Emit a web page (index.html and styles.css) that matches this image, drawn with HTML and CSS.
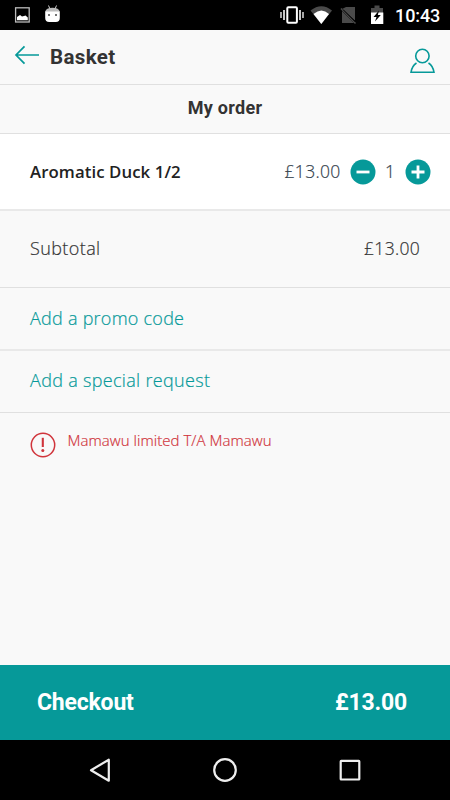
FILE: index.html
```html
<!DOCTYPE html>
<html lang="en">
<head>
<meta charset="utf-8">
<title>Basket</title>
<link rel="stylesheet" href="styles.css">
</head>
<body>
<div class="screen">
  <div class="status">
    <svg class="status-left" width="80" height="30" viewBox="0 0 80 30">
      <rect x="15.600" y="7.800" width="13.600" height="14.200" fill="none" stroke="#bbb" stroke-width="1.300"/>
      <path d="M17 20.300V17l3-2 2 1.500 2-.5 1.500-.5 2.300 2v2.800z" fill="#fff"/>
      <path d="M48.500 5.500l1.500 3.500M56.500 5.500L55 9" stroke="#ccc" stroke-width="1"/>
      <path d="M45.200 12Q46 7.800 52.500 7.800T59.800 12z" fill="#bbb"/>
      <path d="M45.200 11.500h14.600V18q0 4-4 4h-6.600q-4 0-4-4z" fill="#fff"/>
      <circle cx="49" cy="15" r="1" fill="#444"/><circle cx="56" cy="15" r="1" fill="#444"/>
    </svg>
    <svg class="status-right" width="114" height="30" viewBox="276 0 114 30">
      <rect x="287.300" y="7.300" width="9.600" height="15.400" rx="1" fill="none" stroke="#fff" stroke-width="2"/>
      <path d="M284 10v10M300 10v10" stroke="#ddd" stroke-width="1.800"/>
      <path d="M281 12v6M303 12v6" stroke="#ddd" stroke-width="1.500"/>
      <path d="M310.500 10.500Q321.500 2 332 10.500L321.300 24z" fill="#4a4a4a"/>
      <path d="M313.500 14Q321.500 7 329 14L321.300 24z" fill="#fff"/>
      <path d="M346 7h9v13.500L342 9zM342 11l12 12h-12z" fill="#4a4a4a"/>
      <path d="M341 8.500l14.500 15" stroke="#4a4a4a" stroke-width="1.500"/>
      <path d="M343 9.500l12.500 12.500" stroke="#000" stroke-width="1"/>
      <path d="M371 13V8h3.500V5.500h5V8h3.500v5z" fill="#4a4a4a"/>
      <path d="M371 12.500h12.300V24H371z" fill="#fff"/>
      <path d="M379 10.500l-5.500 6.500h3l-1.500 4.500 5.800-6.500h-3z" fill="#000"/>
    </svg>
    <span class="clock">10:43</span>
  </div>
  <header class="header">
    <svg class="back" width="26" height="20" viewBox="0 0 26 20" fill="none" stroke="#069999" stroke-width="1.700"><path d="M25 10H2M10.500 1.400L2 10l8.500 8.600"/></svg>
    <h1 class="title">Basket</h1>
    <svg class="user" width="28" height="28" viewBox="0 0 28 28" fill="none" stroke="#069999" stroke-width="1.600"><circle cx="13.400" cy="9" r="6.700"/><path d="M7.500 16Q3 19 2 25.300h23Q24 19 19.500 16"/></svg>
  </header>
  <h2 class="subhead">My order</h2>
  <div class="row item">
    <span class="name">Aromatic Duck 1/2</span>
    <span class="price item-price">£13.00</span>
    <svg class="btn" width="26" height="26" viewBox="0 0 26 26"><circle cx="13" cy="13" r="12.500" fill="#069999"/><path d="M6.500 13h13" stroke="#fff" stroke-width="2.800"/></svg>
    <span class="qty">1</span>
    <svg class="btn" width="26" height="26" viewBox="0 0 26 26"><circle cx="13" cy="13" r="12.500" fill="#069999"/><path d="M6.500 13h13M13 6.500v13" stroke="#fff" stroke-width="2.800"/></svg>
  </div>
  <div class="row subtotal"><span class="label">Subtotal</span><span class="price">£13.00</span></div>
  <div class="row promo"><span class="link link-promo">Add a promo code</span></div>
  <div class="row request"><span class="link link-request">Add a special request</span></div>
  <div class="notice">
    <svg width="26" height="26" viewBox="0 0 26 26" fill="none" stroke="#d0343b"><circle cx="13" cy="13" r="11.700" stroke-width="1.500"/><path d="M12.800 5.800v9.200" stroke-width="2.100"/><circle cx="12.800" cy="18.600" r="1.500" fill="#d0343b" stroke="none"/></svg>
    <span class="notice-text">Mamawu limited T/A Mamawu</span>
  </div>
  <div class="checkout"><span class="checkout-label">Checkout</span><span class="checkout-price">£13.00</span></div>
  <nav class="nav">
    <svg width="26" height="26" viewBox="0 0 26 26"><path d="M21.800 2.700v21L4 13.200z"/></svg>
    <svg width="26" height="26" viewBox="0 0 26 26"><circle cx="13" cy="13" r="10.800"/></svg>
    <svg width="26" height="26" viewBox="0 0 26 26"><rect x="3.700" y="3.900" width="18.600" height="18.600" rx=".5"/></svg>
  </nav>
</div>
</body>
</html>
```
FILE: styles.css
```css
* { box-sizing: border-box; }
body { margin: 0; }
.screen {
  width: 450px; height: 800px; display: flex; flex-direction: column;
  background: #f9f9f9; color: #333;
  font-family: "Open Sans", "Noto Sans", sans-serif; overflow: hidden;
}
svg { display: block; flex: none; }
span { white-space: nowrap; }
.status { height: 30px; background: #000; display: flex; align-items: center; }
.status-right { margin-left: 196px; }
.clock { color: #fff; font: 500 18px/30px Roboto, sans-serif; margin-left: 5px; padding-top: 2px; letter-spacing: -.1px; }
.header { height: 55px; display: flex; align-items: center; border-bottom: 1px solid #e0e0e0; padding: 0 14px; }
.back { margin-top: -4px; }
.title { margin: 0 auto 0 10px; font: 700 20.500px/54px Roboto, sans-serif; letter-spacing: .35px; }
.user { margin-right: -1px; margin-top: 8px; }
.subhead { margin: 0; height: 49px; border-bottom: 1px solid #e0e0e0; text-align: center; font: 700 18px/46px Roboto, sans-serif; letter-spacing: .3px; }
.row { display: flex; align-items: center; padding: 0 30px; border-bottom: 1px solid #e0e0e0; }
.item { height: 77px; background: #fff; padding-right: 19.500px; border-bottom: 2px solid #e9e9e9; }
.name { font-size: 16.800px; font-weight: 600; color: #222; margin-right: auto; letter-spacing: .08px; padding-bottom: 1px; }
.price, .qty, .label, .link, .notice-text { font-weight: 300; -webkit-text-stroke: .2px currentColor; }
.price { font-size: 17.500px; letter-spacing: .3px; }
.item-price { margin-right: 9px; color: #35424d; padding-bottom: 1px; }
.qty { width: 29px; text-align: center; font-size: 17.500px; color: #35424d; padding-bottom: 1px; }
.subtotal { height: 77px; justify-content: space-between; padding-bottom: 2px; }
.label { font-size: 18px; letter-spacing: .4px; }
.promo { height: 63px; border-bottom: 2px solid #e9e9e9; padding-bottom: 2px; }
.request { height: 62px; padding-bottom: 3px; }
.link { font-size: 18px; color: #069999; letter-spacing: .25px; }
.link-request { letter-spacing: .32px; }
.notice { display: flex; padding: 18.500px 29.500px; gap: 12px; flex: 1; }
.notice-text { font-size: 15px; line-height: 20px; margin-top: -2px; color: #d0343b; letter-spacing: .05px; }
.checkout { height: 75px; background: #069999; color: #fff; display: flex; justify-content: space-between; align-items: center; padding: 0 43px 0 37px; font: 700 23px/1 Roboto, sans-serif; letter-spacing: -.2px; }
.nav { height: 60px; background: #000; display: flex; justify-content: center; gap: 99px; align-items: center; }
.nav svg { fill: none; stroke: #eee; stroke-width: 2.200; stroke-linejoin: round; }
```
